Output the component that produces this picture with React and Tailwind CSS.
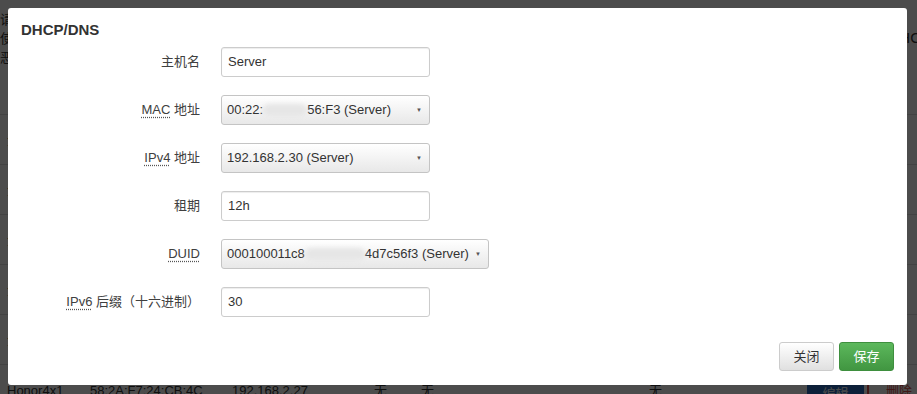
import React from "react";

const font = { fontFamily: '"Liberation Sans", "Noto Sans CJK SC", sans-serif' };

function Label({ abbr, rest }) {
  return (
    <label className="w-[192px] shrink-0 text-right text-[13px] text-[#404040]">
      {abbr && <span className="underline decoration-dotted decoration-[#555] underline-offset-[3px]">{abbr}</span>}
      {abbr && rest ? " " : ""}
      {rest}
    </label>
  );
}

function TextInput({ value }) {
  return (
    <div className="ml-[21px] flex h-[30px] w-[209px] items-center rounded-[3px] border border-[#ccc] bg-white px-[6px] text-[13px] text-[#333] shadow-[inset_0_1px_1px_rgba(0,0,0,0.075)]">
      {value}
    </div>
  );
}

function Select({ children, wide }) {
  return (
    <div
      className={
        "ml-[21px] flex h-[30px] items-center justify-between rounded-[3px] border border-[#c4c4c4] bg-gradient-to-b from-white to-[#e8e8e8] pl-[5px] pr-[7px] text-[13px] text-[#333] " +
        (wide ? "w-[268px]" : "w-[209px]")
      }
    >
      <span className="flex items-center whitespace-nowrap">{children}</span>
      <span className="text-[6px] text-[#555]">▼</span>
    </div>
  );
}

function Blur({ w }) {
  return <span className={"inline-block h-[12px] rounded-full bg-[#e6e6e6] blur-[2px] " + w} />;
}

const bgRows = [0, 1, 2, 3, 4];

export default function App() {
  return (
    <div className="relative h-[394px] w-[917px] overflow-hidden bg-white" style={font}>
      {/* page behind the dialog */}
      <div className="flex h-[115px] justify-between border-b border-[#ddd] pt-[10px] text-[13px] leading-[19px] text-[#333]">
        <div>
          <p>请</p>
          <p>使</p>
          <p>恶</p>
        </div>
        <p className="mr-[-14px] mt-[18px] text-[15px]">DHCP</p>
      </div>
      {bgRows.map((i) => (
        <div key={i} className="flex h-[50px] items-center border-b border-[#ddd] text-[13px] text-[#333]">
          <span className="pl-[7px]">无</span>
          <span className="ml-auto mr-[10px] h-[28px] w-[3px] bg-[#d9534f]" />
        </div>
      ))}
      <div className="flex h-[50px] items-start pt-[16px] text-[13px] text-[#333]">
        <span className="ml-[7px] w-[83px]">Honor4x1</span>
        <span className="w-[142px]">58:2A:F7:24:CB:4C</span>
        <span className="w-[142px]">192.168.2.27</span>
        <span className="w-[47px]">无</span>
        <span className="w-[228px]">无</span>
        <span className="w-[158px]">无</span>
        <span className="flex h-[26px] w-[57px] items-center justify-center bg-[#2d6cc0] text-white">编辑</span>
        <span className="ml-[3px] h-[26px] w-[2px] bg-[#d9534f]" />
        <span className="ml-[17px] text-[#d9534f]">删除</span>
      </div>

      {/* overlay + dialog */}
      <div className="absolute inset-0 bg-black/70">
        <div className="absolute left-[8px] top-[8px] flex h-[377px] w-[899px] flex-col rounded-[3px] bg-white">
          <h3 className="px-[13px] pt-[12px] text-[15px] font-bold leading-[20px] text-[#333]">DHCP/DNS</h3>
          <div className="mt-[7px] flex flex-col gap-[18px]">
            <div className="flex items-center">
              <Label rest="主机名" />
              <TextInput value="Server" />
            </div>
            <div className="flex items-center">
              <Label abbr="MAC" rest="地址" />
              <Select>
                00:22:<Blur w="w-[44px]" />56:F3 (Server)
              </Select>
            </div>
            <div className="flex items-center">
              <Label abbr="IPv4" rest="地址" />
              <Select>192.168.2.30 (Server)</Select>
            </div>
            <div className="flex items-center">
              <Label rest="租期" />
              <TextInput value="12h" />
            </div>
            <div className="flex items-center">
              <Label abbr="DUID" />
              <Select wide>
                000100011c8<Blur w="w-[60px]" />4d7c56f3 (Server)
              </Select>
            </div>
            <div className="flex items-center">
              <Label abbr="IPv6" rest="后缀（十六进制）" />
              <TextInput value="30" />
            </div>
          </div>
          <div className="mt-auto flex justify-end gap-[5px] pb-[14px] pr-[13px]">
            <button className="h-[29px] w-[55px] rounded-[3px] border border-[#ccc] bg-gradient-to-b from-white to-[#e0e0e0] text-[13px] text-[#333]">
              关闭
            </button>
            <button className="h-[29px] w-[55px] rounded-[3px] border border-[#3e8f3e] bg-gradient-to-b from-[#5cb85c] to-[#419641] text-[13px] text-white">
              保存
            </button>
          </div>
        </div>
      </div>
    </div>
  );
}
